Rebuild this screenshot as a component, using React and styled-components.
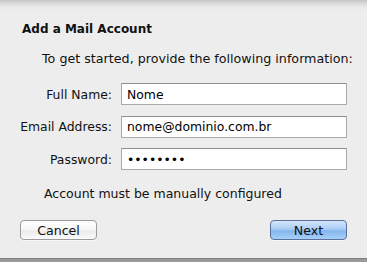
import React, { useState } from "react";
import styled, { createGlobalStyle } from "styled-components";

const GlobalStyle = createGlobalStyle`
  html, body {
    margin: 0;
    padding: 0;
    background: #ededed;
  }
  body {
    font-family: "DejaVu Sans", "Liberation Sans", sans-serif;
    color: #111;
  }
`;

const fields = [
  { label: "Full Name:", value: "Nome", type: "text" },
  { label: "Email Address:", value: "nome@dominio.com.br", type: "text" },
  { label: "Password:", value: "password", type: "password" },
];

const App = () => {
  const [values, setValues] = useState(fields.map((f) => f.value));

  const update = (i, v) => {
    const next = [...values];
    next[i] = v;
    setValues(next);
  };

  return (
    <Sheet>
      <GlobalStyle />
      <Title>Add a Mail Account</Title>
      <Intro>To get started, provide the following information:</Intro>

      <Form>
        {fields.map((f, i) => (
          <React.Fragment key={f.label}>
            <Label>{f.label}</Label>
            <Input
              type={f.type}
              value={values[i]}
              onChange={(e) => update(i, e.target.value)}
            />
          </React.Fragment>
        ))}
      </Form>

      <Note>Account must be manually configured</Note>

      <Buttons>
        <Button>Cancel</Button>
        <Button primary>Next</Button>
      </Buttons>
    </Sheet>
  );
};

const Sheet = styled.div`
  box-sizing: border-box;
  width: 367px;
  height: 262px;
  display: flex;
  flex-direction: column;
  background: linear-gradient(
      to bottom,
      #c4c4c4 0px,
      #d8d8d8 3px,
      #e6e6e6 6px,
      #ededed 10px
    ),
    #ededed;
  background-size: 100% 12px;
  background-repeat: no-repeat;
  background-color: #ededed;
  border-bottom: 3px solid #9a9a9a;
  box-shadow: inset 0 -4px 0 -3px #7d7d7d;
`;

const Title = styled.div`
  font-size: 12px;
  font-weight: bold;
  margin: 21px 0 0 22px;
  line-height: 16px;
`;

const Intro = styled.div`
  font-size: 12.7px;
  margin: 14px 0 0 42px;
  line-height: 16px;
`;

const Form = styled.div`
  display: grid;
  grid-template-columns: 112px 226px;
  column-gap: 9px;
  row-gap: 10.5px;
  margin-top: 16px;
  align-items: center;
`;

const Label = styled.label`
  font-size: 12.4px;
  text-align: right;
  white-space: nowrap;
`;

const Input = styled.input`
  box-sizing: border-box;
  height: 22px;
  width: 226px;
  margin: 0;
  padding: 0 5px;
  border: 1px solid #ababab;
  border-top-color: #8e8e8e;
  background: #fff;
  font-family: "DejaVu Sans", "Liberation Sans", sans-serif;
  font-size: 12.4px;
  color: #000;
  outline: none;
`;

const Note = styled.div`
  font-size: 12.5px;
  margin: 16px 0 0 44px;
  line-height: 16px;
`;

const Buttons = styled.div`
  display: flex;
  justify-content: space-between;
  padding: 0 20px;
  margin-top: 18px;
`;

const Button = styled.button`
  box-sizing: border-box;
  width: 77px;
  height: 20px;
  padding: 0;
  border-radius: 4px;
  font-family: "DejaVu Sans", "Liberation Sans", sans-serif;
  font-size: 12.6px;
  color: #111;
  border: 1px solid ${({ primary }) => (primary ? "#5b6f9c" : "#9c9c9c")};
  background: ${({ primary }) =>
    primary
      ? "linear-gradient(to bottom, #d3e6fb 0%, #a9cdf5 45%, #84b6ef 55%, #a6d0f8 100%)"
      : "linear-gradient(to bottom, #ffffff 0%, #f6f6f6 50%, #ebebeb 55%, #fafafa 100%)"};
  box-shadow: 0 1px 0 rgba(255, 255, 255, 0.6);
`;

export default App;
